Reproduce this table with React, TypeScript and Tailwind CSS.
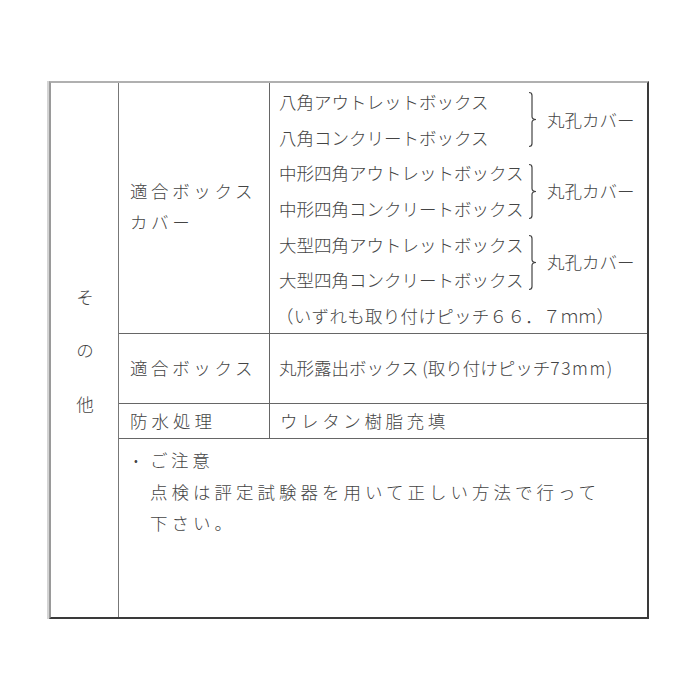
import React from "react";

const font = {
  fontFamily: '"Noto Sans CJK JP", "Noto Sans", sans-serif',
};

function Bracket() {
  return (
    <svg width="10" height="57" viewBox="0 0 10 57" className="shrink-0">
      <path
        d="M1 1.5 Q4 1.5 4 4.5 L4 25.5 Q4 28.5 8 28.5 Q4 28.5 4 31.5 L4 52.5 Q4 55.5 1 55.5"
        fill="none"
        stroke="#444"
        strokeWidth="1.2"
      />
    </svg>
  );
}

function Group({ a, b }: { a: string; b: string }) {
  return (
    <div className="flex items-center">
      <div className="w-[249px] flex flex-col">
        <div className="h-[35.7px] leading-[35.7px] whitespace-nowrap">{a}</div>
        <div className="h-[35.7px] leading-[35.7px] whitespace-nowrap">{b}</div>
      </div>
      <Bracket />
      <div className="ml-[9px] whitespace-nowrap">丸孔カバー</div>
    </div>
  );
}

export default function App() {
  return (
    <div
      className="w-[700px] h-[700px] bg-white pt-[81px] pl-[47px] text-[#444] text-[17.5px] font-light"
      style={font}
    >
      <div className="w-[602px] h-[538px] border-l-2 border-l-[#d4d4d4]">
        <div className="flex h-full border-l-2 border-l-[#9a9a9a] border-t-2 border-t-[#b0b0b0] border-r-2 border-r-[#3a3a3a] border-b-2 border-b-[#3a3a3a]">
          <div className="w-[68px] shrink-0 border-r border-r-[#777] flex flex-col items-center justify-center gap-[36px] leading-[17.5px] pl-[1px]">
            <span>そ</span>
            <span>の</span>
            <span>他</span>
          </div>
          <div className="flex-1 flex flex-col">
            <div className="h-[251px] flex border-b border-b-[#666]">
              <div className="w-[151px] shrink-0 border-r border-r-[#666] flex items-center pl-[11px] pb-[4px] tracking-[3.6px] leading-[31px]">
                <div>
                  適合ボックス
                  <br />
                  カバー
                </div>
              </div>
              <div className="flex-1 flex flex-col pl-[9px] pt-[1px]">
                <Group a="八角アウトレットボックス" b="八角コンクリートボックス" />
                <Group a="中形四角アウトレットボックス" b="中形四角コンクリートボックス" />
                <Group a="大型四角アウトレットボックス" b="大型四角コンクリートボックス" />
                <div className="h-[35.7px] leading-[35.7px] whitespace-nowrap -ml-[3px] tracking-[0.3px]">
                  （いずれも取り付けピッチ６６．７ｍｍ）
                </div>
              </div>
            </div>
            <div className="h-[70px] flex border-b border-b-[#666]">
              <div className="w-[151px] shrink-0 border-r border-r-[#666] flex items-center pl-[11px] tracking-[3.6px]">
                適合ボックス
              </div>
              <div className="flex-1 flex items-center pl-[9px] whitespace-nowrap">
                丸形露出ボックス (取り付けピッチ
                <span className="tracking-[1.5px]">73mm</span>)
              </div>
            </div>
            <div className="h-[35px] flex border-b border-b-[#666]">
              <div className="w-[151px] shrink-0 border-r border-r-[#666] flex items-center pl-[11px] tracking-[4px]">
                防水処理
              </div>
              <div className="flex-1 flex items-center pl-[10px] tracking-[3.6px]">
                ウレタン樹脂充填
              </div>
            </div>
            <div className="flex-1 pl-[31px] pt-[5px] leading-[31.5px] tracking-[4px]">
              <div className="-ml-[16px] flex">
                <span className="w-[16px] text-[12px] tracking-normal">•</span>
                <span className="tracking-[3.6px]">ご注意</span>
              </div>
              <div className="whitespace-nowrap">点検は評定試験器を用いて正しい方法で行って</div>
              <div>下さい。</div>
            </div>
          </div>
        </div>
      </div>
    </div>
  );
}
